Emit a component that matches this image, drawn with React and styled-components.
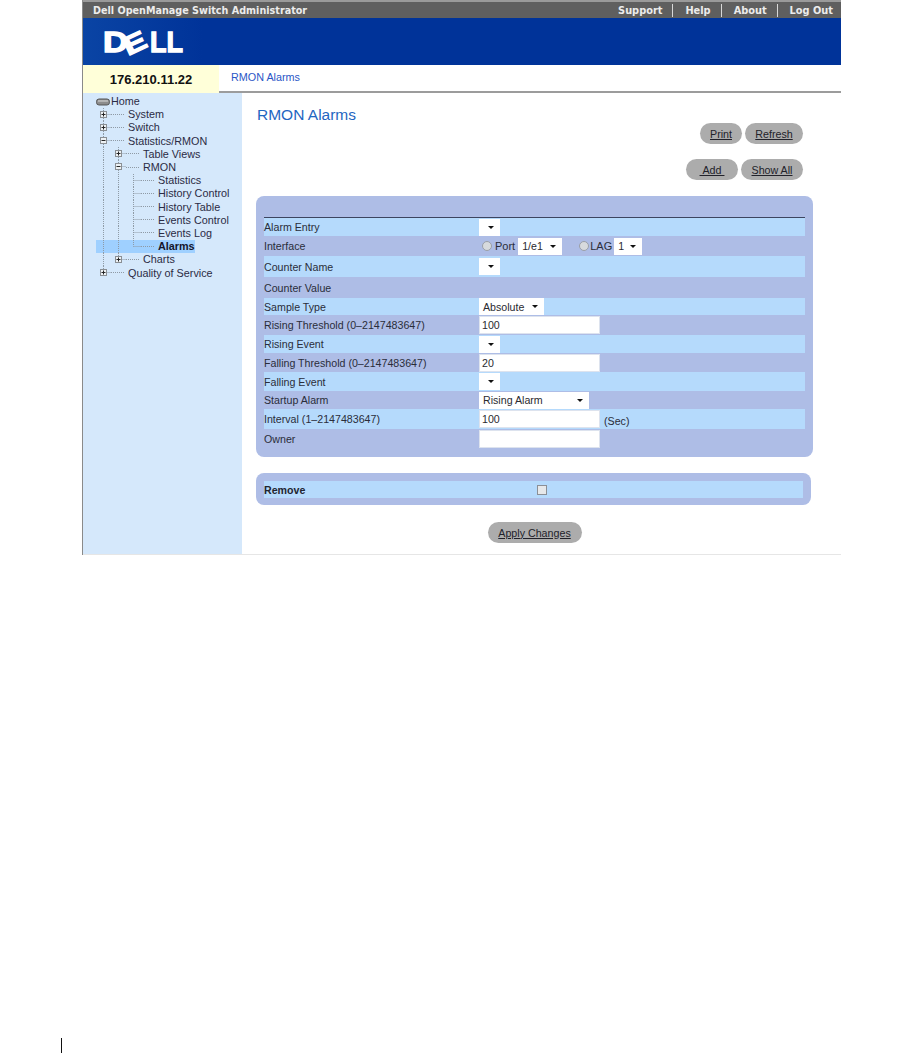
import React from 'react'
import styled, { createGlobalStyle } from 'styled-components'

const topLinks = ['Support', 'Help', 'About', 'Log Out']

const treeItems = [
    { label: 'System', cells: ['tee+'] },
    { label: 'Switch', cells: ['tee+'] },
    { label: 'Statistics/RMON', cells: ['tee-'] },
    { label: 'Table Views', cells: ['pipe', 'tee+'] },
    { label: 'RMON', cells: ['pipe', 'tee-'] },
    { label: 'Statistics', cells: ['pipe', 'pipe', 'tee'] },
    { label: 'History Control', cells: ['pipe', 'pipe', 'tee'] },
    { label: 'History Table', cells: ['pipe', 'pipe', 'tee'] },
    { label: 'Events Control', cells: ['pipe', 'pipe', 'tee'] },
    { label: 'Events Log', cells: ['pipe', 'pipe', 'tee'] },
    { label: 'Alarms', cells: ['pipe', 'pipe', 'last'], selected: true },
    { label: 'Charts', cells: ['pipe', 'last+'] },
    { label: 'Quality of Service', cells: ['last+'] },
]

const TreeCell = ({ kind }) => {
    const down = kind !== 'blank' && !kind.startsWith('last')
    const across = kind !== 'pipe' && kind !== 'blank'
    const sign = kind.slice(-1)
    return (
        <svg width="15" height="13.2" viewBox="0 0 15 13.2" style={{ flex: 'none' }}>
            <g stroke="#8f9aa5" strokeDasharray="1 1" fill="none">
                {kind !== 'blank' && <path d={down ? 'M7.5 0V13.2' : 'M7.5 0V6.5'} />}
                {across && <path d="M7.5 6.5H15" />}
            </g>
            {(sign === '+' || sign === '-') && (
                <g>
                    <rect x="4.5" y="3.5" width="6" height="6" fill="#eef2f5" stroke="#8a8f94" />
                    <path d={sign === '+' ? 'M5.5 6.5H9.5M7.5 4.5V8.5' : 'M5.5 6.5H9.5'} stroke="#222" />
                </g>
            )}
        </svg>
    )
}

const App = () => {
    return (
        <>
            <GlobalStyle />
            <Frame>
                <TopBar>
                    <TopTitle>Dell OpenManage Switch Administrator</TopTitle>
                    <TopLinks>
                        {topLinks.map(link => <TopLink key={link}>{link}</TopLink>)}
                    </TopLinks>
                </TopBar>
                <Banner>
                    <svg width="112" height="47" viewBox="0 0 112 47">
                        <g fontFamily="Liberation Sans, sans-serif" fontWeight="700" fill="#fff" stroke="#fff" strokeWidth="1.3">
                            <text x="20" y="34" fontSize="30" textLength="25" lengthAdjust="spacingAndGlyphs">D</text>
                            <text transform="translate(45 38) rotate(-25)" fontSize="26" textLength="23" lengthAdjust="spacingAndGlyphs">E</text>
                            <text x="67" y="34" fontSize="30" textLength="33" lengthAdjust="spacingAndGlyphs">LL</text>
                        </g>
                    </svg>
                </Banner>
                <AddressBar>
                    <IpBox>176.210.11.22</IpBox>
                    <Crumb>RMON Alarms</Crumb>
                </AddressBar>
                <Body>
                    <Sidebar>
                        <TreeRow>
                            <svg width="14" height="13.2" viewBox="0 0 14 13.2" style={{ flex: 'none' }}>
                                <rect x="0.5" y="4" width="13" height="6" rx="2.5" fill="#8d8d8d" stroke="#555" />
                                <path d="M2 6H12" stroke="#ddd" />
                            </svg>
                            <HomeLabel>Home</HomeLabel>
                        </TreeRow>
                        {treeItems.map(item => (
                            <TreeRow key={item.label} $selected={item.selected}>
                                {item.cells.map((kind, i) => <TreeCell key={i} kind={kind} />)}
                                <TreeTail />
                                <TreeLabel $selected={item.selected}>{item.label}</TreeLabel>
                            </TreeRow>
                        ))}
                    </Sidebar>
                    <Content>
                        <PageTitle>RMON Alarms</PageTitle>
                        <ButtonRow $top={-1}>
                            <PillButton $w={42}>Print</PillButton>
                            <PillButton $w={58}>Refresh</PillButton>
                        </ButtonRow>
                        <ButtonRow $top={15}>
                            <PillButton $w={52}>&nbsp;Add&nbsp;</PillButton>
                            <PillButton $w={62}>Show All</PillButton>
                        </ButtonRow>
                        <FormPanel>
                            <PanelRule />
                            <Row $light $h={18}>
                                <RowLabel>Alarm Entry</RowLabel>
                                <Select $w={21} />
                            </Row>
                            <Row $h={20}>
                                <RowLabel>Interface</RowLabel>
                                <Radio />
                                <RadioLabel>Port</RadioLabel>
                                <Select $w={44}>1/e1</Select>
                                <Radio $gap={17} />
                                <RadioLabel $tight>LAG</RadioLabel>
                                <Select $w={28}>1</Select>
                            </Row>
                            <Row $light $h={21}>
                                <RowLabel>Counter Name</RowLabel>
                                <Select $w={21} />
                            </Row>
                            <Row $h={21}>
                                <RowLabel>Counter Value</RowLabel>
                            </Row>
                            <Row $light $h={17}>
                                <RowLabel>Sample Type</RowLabel>
                                <Select $w={65}>Absolute</Select>
                            </Row>
                            <Row $h={20}>
                                <RowLabel>Rising Threshold (0–2147483647)</RowLabel>
                                <TextBox>100</TextBox>
                            </Row>
                            <Row $light $h={18}>
                                <RowLabel>Rising Event</RowLabel>
                                <Select $w={21} />
                            </Row>
                            <Row $h={19}>
                                <RowLabel>Falling Threshold (0–2147483647)</RowLabel>
                                <TextBox>20</TextBox>
                            </Row>
                            <Row $light $h={19}>
                                <RowLabel>Falling Event</RowLabel>
                                <Select $w={21} />
                            </Row>
                            <Row $h={18}>
                                <RowLabel>Startup Alarm</RowLabel>
                                <Select $w={110}>Rising Alarm</Select>
                            </Row>
                            <Row $light $h={20}>
                                <RowLabel>Interval (1–2147483647)</RowLabel>
                                <TextBox>100</TextBox>
                                <Unit>(Sec)</Unit>
                            </Row>
                            <Row $h={19}>
                                <RowLabel>Owner</RowLabel>
                                <TextBox />
                            </Row>
                        </FormPanel>
                        <RemovePanel>
                            <RemoveRow>
                                <RemoveLabel>Remove</RemoveLabel>
                                <CheckBox />
                            </RemoveRow>
                        </RemovePanel>
                        <ApplyRow>
                            <PillButton $w={94}>Apply Changes</PillButton>
                        </ApplyRow>
                    </Content>
                </Body>
            </Frame>
            <PageMark />
        </>
    )
}

export default App


const GlobalStyle = createGlobalStyle`
    html,body{
        margin:0;
        padding:0;
        background:#fff;
    }
    body{
        font-family:"Liberation Sans",Arial,sans-serif;
        font-size:11px;
        color:#2b2b33;
        height:1053px;
        overflow:hidden;
    }
`

const Frame = styled.div`
    width:759px;
    margin-left:82px;
    height:555px;
    border-left:1px solid #8a8a8a;
    box-sizing:border-box;
    display:flex;
    flex-direction:column;
`

const TopBar = styled.div`
    height:18px;
    flex:none;
    box-sizing:border-box;
    border-top:2px solid #9a9a9a;
    background:#5f5f5f;
    display:flex;
    align-items:center;
    justify-content:space-between;
    padding:0 0 0 10px;
    font-family:"DejaVu Sans",Verdana,sans-serif;
    font-weight:700;
    color:#ececec;
`

const TopTitle = styled.span`
    white-space:nowrap;
    font-size:9.65px;
`

const TopLinks = styled.div`
    display:flex;
    height:100%;
    align-items:center;
`

const TopLink = styled.span`
    padding:0 10px 0 12px;
    line-height:13px;
    border-left:1px solid #d8d8d8;
    font-size:9.8px;
    &:first-child{
        border-left:0;
    }
    &:last-child{
        padding-right:8px;
    }
`

const Banner = styled.div`
    height:47px;
    flex:none;
    background:linear-gradient(to right,#0a44a4,#003399 120px);
    display:flex;
`

const AddressBar = styled.div`
    height:28px;
    flex:none;
    display:flex;
    background:#fff;
`

const IpBox = styled.div`
    width:136px;
    flex:none;
    background:#ffffd9;
    display:flex;
    align-items:center;
    justify-content:center;
    font-size:13px;
    font-weight:700;
    color:#111;
`

const Crumb = styled.div`
    flex:1;
    box-sizing:border-box;
    border-bottom:2px solid #9c9c9c;
    padding-left:12px;
    padding-bottom:3px;
    display:flex;
    align-items:center;
    font-size:10.8px;
    color:#2a56c6;
`

const Body = styled.div`
    flex:1;
    display:flex;
    min-height:0;
    border-bottom:1px solid #e6e6e6;
`

const Sidebar = styled.div`
    width:159px;
    flex:none;
    box-sizing:border-box;
    background:#d5e8fb;
    padding:1.5px 0 0 13px;
`

const TreeRow = styled.div`
    display:flex;
    align-items:center;
    height:13.2px;
    width:${props => (props.$selected ? '99px' : '145px')};
    background:${props => (props.$selected ? '#9fd0ff' : 'transparent')};
    white-space:nowrap;
`

const TreeTail = styled.span`
    flex:none;
    width:14px;
    margin-right:3px;
    height:1px;
    background-image:linear-gradient(to right,#8f9aa5 50%,transparent 50%);
    background-size:2px 1px;
`

const TreeLabel = styled.span`
    font-size:10.8px;
    font-weight:${props => (props.$selected ? 700 : 400)};
    color:${props => (props.$selected ? '#15152a' : '#2b2b44')};
`

const HomeLabel = styled.span`
    margin-left:1px;
    font-size:10.8px;
    color:#2b2b44;
`

const Content = styled.div`
    flex:1;
    min-width:0;
    padding:12px 0 0 14px;
`

const PageTitle = styled.h1`
    margin:0 0 0 1px;
    font-size:15.5px;
    line-height:19px;
    font-weight:400;
    color:#1f66c1;
`

const ButtonRow = styled.div`
    display:flex;
    justify-content:flex-end;
    gap:3px;
    margin-top:${props => props.$top}px;
    padding-right:38px;
`

const PillButton = styled.span`
    width:${props => props.$w}px;
    height:21px;
    box-sizing:border-box;
    border-radius:11px;
    background:#acacac;
    display:flex;
    align-items:center;
    justify-content:center;
    font-size:10.7px;
    color:#22222a;
    text-decoration:underline;
    white-space:pre;
`

const FormPanel = styled.div`
    width:557px;
    height:261px;
    margin-top:16px;
    box-sizing:border-box;
    padding:21px 8px 0;
    border-radius:8px;
    background:#aebde6;
`

const PanelRule = styled.div`
    height:1px;
    background:#3d4560;
`

const Row = styled.div`
    height:${props => props.$h}px;
    display:flex;
    align-items:center;
    background:${props => (props.$light ? '#b5dafc' : 'transparent')};
`

const RowLabel = styled.span`
    width:215px;
    flex:none;
    font-size:10.65px;
    color:#2a2d3a;
`

const Select = styled.span`
    width:${props => props.$w}px;
    height:17px;
    box-sizing:border-box;
    flex:none;
    background:#fff;
    display:flex;
    align-items:center;
    padding-left:4px;
    font-size:10.65px;
    color:#2a2a30;
    position:relative;
    &::after{
        content:"";
        position:absolute;
        right:6px;
        top:7px;
        border-left:3px solid transparent;
        border-right:3px solid transparent;
        border-top:3px solid #111;
    }
`

const Radio = styled.span`
    width:10px;
    height:10px;
    box-sizing:border-box;
    flex:none;
    margin-left:${props => props.$gap || 3}px;
    border-radius:50%;
    border:1px solid #9a9fa8;
    background:#d7dadd;
`

const RadioLabel = styled.span`
    margin:0 ${props => (props.$tight ? 2 : 3)}px 0 ${props => (props.$tight ? 1 : 3)}px;
    font-size:11px;
    color:#2a2d3a;
`

const TextBox = styled.span`
    width:121px;
    height:18px;
    box-sizing:border-box;
    flex:none;
    border:1px solid #dde3ee;
    background:#fff;
    display:flex;
    align-items:center;
    padding-left:2px;
    font-size:10.65px;
    color:#2a2a30;
`

const Unit = styled.span`
    margin-left:4px;
    padding-top:3px;
    font-size:10.65px;
    color:#2a2d3a;
`

const RemovePanel = styled.div`
    width:555px;
    height:32px;
    margin-top:16px;
    box-sizing:border-box;
    padding:8px 8px 0;
    border-radius:8px;
    background:#aebde6;
`

const RemoveRow = styled.div`
    height:17px;
    display:flex;
    align-items:center;
    background:#b5dafc;
`

const RemoveLabel = styled.span`
    width:273px;
    flex:none;
    font-size:10.65px;
    font-weight:700;
    color:#22252f;
`

const CheckBox = styled.span`
    width:10px;
    height:10px;
    box-sizing:border-box;
    border:1px solid #8b8f96;
    background:#e6e8ea;
`

const ApplyRow = styled.div`
    width:557px;
    display:flex;
    justify-content:center;
    margin-top:17px;
`

const PageMark = styled.div`
    width:1px;
    height:15px;
    margin:483px 0 0 61px;
    background:#111;
`
